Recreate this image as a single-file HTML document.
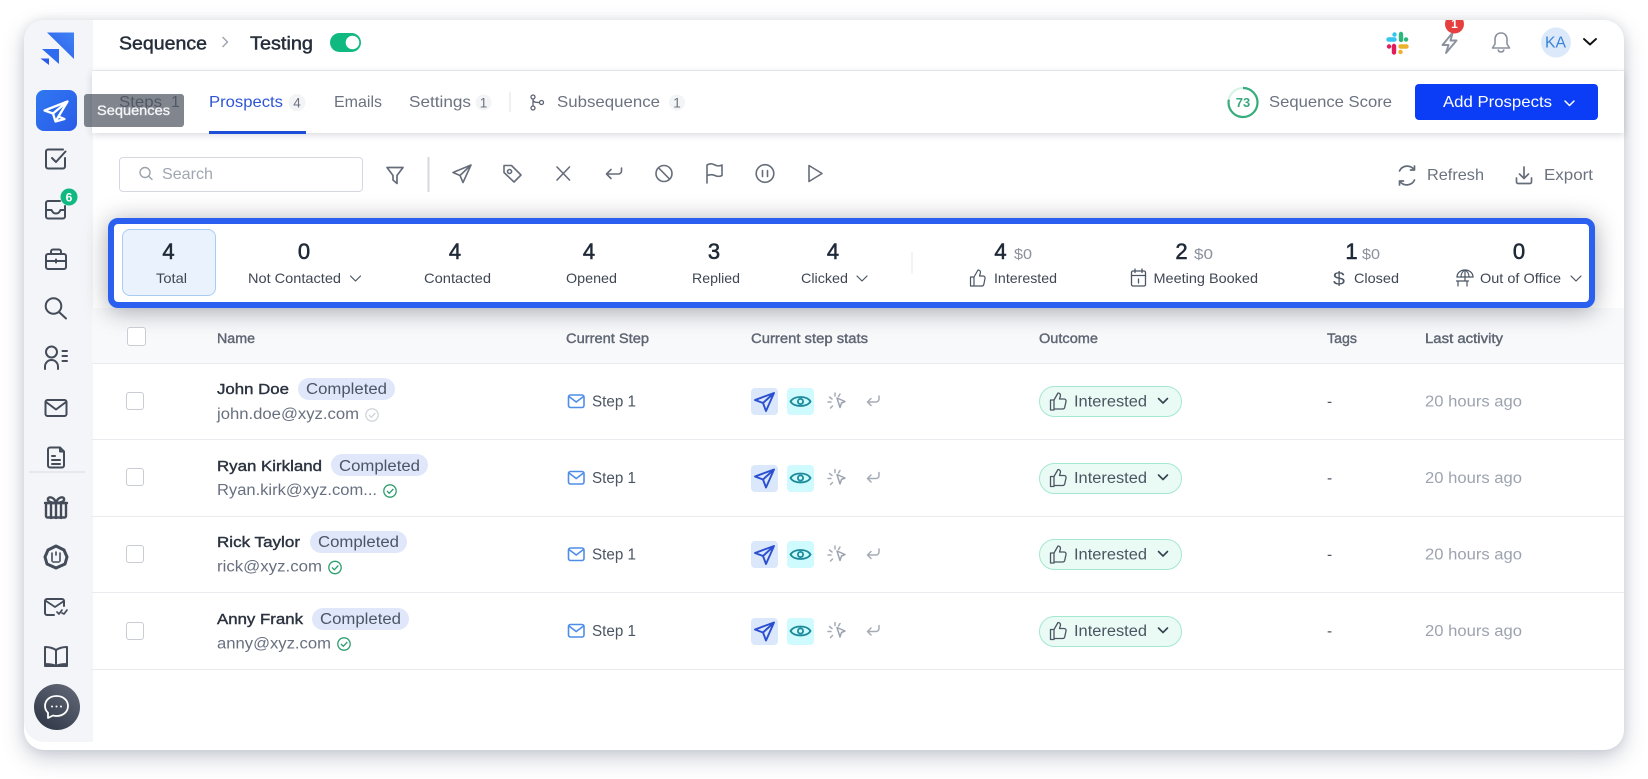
<!DOCTYPE html>
<html><head><meta charset="utf-8"><title>Sequence</title>
<style>
html,body{margin:0;padding:0;background:#fff;width:1648px;height:779px;overflow:hidden}
.a{position:absolute}
#card{left:24px;top:20px;width:1600px;height:730px;background:#fff;border-radius:20px;box-shadow:0 8px 22px rgba(70,80,110,.28),0 0 10px rgba(70,80,110,.12)}
#side{left:24px;top:20px;width:68.5px;height:722px;background:#f3f5f8;border-radius:20px 0 0 20px}
#line1{left:92px;top:70px;width:1532px;height:1px;background:#eceef1}
#tabs{left:92px;top:71px;width:1532px;height:62px;background:#fff;box-shadow:0 2px 7px rgba(40,50,70,.18)}
#thead{left:92px;top:308px;width:1532px;height:55px;background:#f8f9fb;border-bottom:1px solid #e8ebf0}
.rl{left:92px;width:1532px;height:1px;background:#e9ebef}
#panel{left:108px;top:218px;width:1487px;height:90px;box-sizing:border-box;background:#fff;border:6px solid #2b5ff0;border-radius:10px;box-shadow:0 3px 24px rgba(20,25,40,.38)}
#total{left:122px;top:229px;width:94px;height:67px;box-sizing:border-box;background:#eaf3fd;border:1.5px solid #a9cdf2;border-radius:8px}
#search{left:119px;top:157px;width:244px;height:35px;box-sizing:border-box;border:1px solid #d5d8e0;border-radius:4px;background:#fff}
#btn{left:1415px;top:84px;width:183px;height:36px;background:#0a3df5;border-radius:4px}
#act{left:36px;top:90px;width:41px;height:41px;border-radius:8px;background:linear-gradient(135deg,#2f78f2,#2a5be8)}
#chat{left:33.5px;top:684px;width:46px;height:46px;border-radius:50%;background:linear-gradient(215deg,#666b79,#2b3444)}
.cb{left:126px;width:18px;height:18px;box-sizing:border-box;border:1px solid #c9ccd3;border-radius:3px;background:#fff}
.pill{left:1039px;width:143px;height:31px;box-sizing:border-box;background:#e9fbf4;border:1px solid #a4e8cf;border-radius:16px}
.bdg{height:22px;width:97px;border-radius:11px;background:#e0e7fb}
.tl{width:27px;height:27px;border-radius:4px}
#over{left:0;top:0}
#tip{left:84px;top:94px;width:100px;height:33px;border-radius:3px;background:rgba(70,76,88,.68)}
text{font-family:"Liberation Sans",sans-serif}
.i{fill:none;stroke:#666d7a;stroke-width:1.6;stroke-linecap:round;stroke-linejoin:round}
.s{fill:none;stroke:#444c5a;stroke-width:2;stroke-linecap:round;stroke-linejoin:round}
.n{font-size:22px;fill:#1f2937;stroke:#1f2937;stroke-width:.55;text-anchor:middle}
.l{font-size:14px;fill:#3f4754}
.d{font-size:15px;fill:#8a909c}
.h{font-size:13.5px;fill:#5f6673;stroke:#5f6673;stroke-width:.4}
.nm{font-size:15px;fill:#2b3340;stroke:#2b3340;stroke-width:.4}
.bt{font-size:15.5px;fill:#4b5563}
.em{font-size:15.5px;fill:#687080}
.st{font-size:15.5px;fill:#4b5563}
.la{font-size:15.5px;fill:#9ca3af}
.tab{font-size:16px;fill:#6b7280}
.ti{font-size:18px;fill:#262e3b;stroke:#262e3b;stroke-width:.45}
</style></head><body>
<div class="a" id="card"></div>
<div class="a" id="side"></div>
<div class="a" id="line1"></div>
<div class="a" id="tabs"></div>
<div class="a" style="left:209px;top:131px;width:97px;height:2.5px;background:#1d4ed8"></div>
<div class="a" id="btn"></div>
<div class="a" id="search"></div>
<div class="a" id="thead"></div>
<div class="a rl" style="top:439px"></div>
<div class="a rl" style="top:516px"></div>
<div class="a rl" style="top:592px"></div>
<div class="a rl" style="top:669px"></div>
<div class="a" id="panel"></div>
<div class="a" id="total"></div>
<div class="a cb" style="left:127px;top:327px;width:19px;height:19px"></div>
<div class="a cb" style="top:392px"></div>
<div class="a cb" style="top:468px"></div>
<div class="a cb" style="top:545px"></div>
<div class="a cb" style="top:622px"></div>
<div class="a bdg" style="left:298px;top:378px"></div>
<div class="a bdg" style="left:331px;top:454px"></div>
<div class="a bdg" style="left:310px;top:531px"></div>
<div class="a bdg" style="left:312px;top:608px"></div>
<div class="a pill" style="top:386px"></div>
<div class="a pill" style="top:463px"></div>
<div class="a pill" style="top:539px"></div>
<div class="a pill" style="top:616px"></div>
<div class="a tl" style="left:751px;top:388px;background:#dbe8fb"></div><div class="a tl" style="left:787px;top:388px;background:#cffafe"></div>
<div class="a tl" style="left:751px;top:465px;background:#dbe8fb"></div><div class="a tl" style="left:787px;top:465px;background:#cffafe"></div>
<div class="a tl" style="left:751px;top:541px;background:#dbe8fb"></div><div class="a tl" style="left:787px;top:541px;background:#cffafe"></div>
<div class="a tl" style="left:751px;top:618px;background:#dbe8fb"></div><div class="a tl" style="left:787px;top:618px;background:#cffafe"></div>
<div class="a" id="act"></div>
<div class="a" id="chat"></div>

<svg class="a" id="over" width="1648" height="779" viewBox="0 0 1648 779" xmlns="http://www.w3.org/2000/svg">
<defs>
<linearGradient id="lg" x1="0" y1="1" x2="1" y2="0"><stop offset="0" stop-color="#2a5be8"/><stop offset="1" stop-color="#3f83f5"/></linearGradient>
<clipPath id="cardclip"><rect x="24" y="20" width="1600" height="730"/></clipPath>
<g id="rowicons">
<rect x="568.5" y="-6" width="15.5" height="12.5" rx="2" fill="none" stroke="#4f8ee8" stroke-width="1.6"/>
<path d="M569 -4.5l7.2 5.5 7.3-5.5" fill="none" stroke="#4f8ee8" stroke-width="1.6"/>
<path d="M774 -8 755 -1l8 3 3 8zM774 -8 763 2" fill="none" stroke="#2b4fd0" stroke-width="1.9" stroke-linejoin="round" stroke-linecap="round"/>
<path d="M790.500 0.500C794 -5.500 807 -5.500 810.500 0.500C807 6.500 794 6.500 790.500 0.500Z" fill="none" stroke="#1b8a9a" stroke-width="1.8"/>
<circle cx="800.500" cy="0.500" r="2.600" fill="none" stroke="#1b8a9a" stroke-width="1.800"/>
<path d="M837 -3 845 0.500 841.500 2 840 6.500Z" fill="none" stroke="#9ca3af" stroke-width="1.500" stroke-linejoin="round"/>
<path d="M835 -8v3M829.500 -4l2.500 2M828 1h3M830.500 7l2-2M840 -7l-1.500 2.500" fill="none" stroke="#a5abb5" stroke-width="1.500" stroke-linecap="round"/>
<path d="M879 -5v3a3 3 0 0 1-3 3h-8.500M871 -2.500 867.500 1l3.500 3.500" fill="none" stroke="#a5abb5" stroke-width="1.500" stroke-linecap="round" stroke-linejoin="round"/>
<path d="M1050.500 -1h3.500v10h-3.500zM1054 -1l4-7c2 0 2.800 1.500 2.300 3.300l-.8 2.700h4.500c1.500 0 2.300 1.200 2 2.500l-1.300 6c-.3 1-1 1.500-2 1.500H1054" fill="none" stroke="#4b5563" stroke-width="1.300" stroke-linejoin="round"/>
<path d="M1158.500 -2.500l4.500 4.500 4.500-4.500" fill="none" stroke="#374151" stroke-width="1.600" stroke-linecap="round" stroke-linejoin="round"/>
</g>
</defs>

<!-- logo -->
<path d="M47 32.500 74 32.500 74 59 Z" fill="url(#lg)"/>
<path d="M42 49h17v15z" fill="#2f6bee"/>
<path d="M40.500 58.500h8.500v6.500z" fill="#2a5be8"/>

<!-- sidebar icons -->
<path d="M67.500 101.500 44.500 110.500l8.500 3 2.500 8zM67.500 101.500 53 113.500M55.500 121.500l3-5 6 2.500z" fill="none" stroke="#fff" stroke-width="2.300" stroke-linejoin="round" stroke-linecap="round"/>
<g class="s">
<path d="M65 158v8.500a2 2 0 0 1-2 2H48a2 2 0 0 1-2-2v-15a2 2 0 0 1 2-2h15"/><path d="M52 158l4 4 9.500-10.500"/>
<path d="M60 201h-12a2 2 0 0 0-2 2v13.500a2 2 0 0 0 2 2h15a2 2 0 0 0 2-2V206"/><path d="M46 210h5.500c1 2.500 2.500 3.500 4.500 3.500s3.500-1 4.500-3.500H65"/>
<rect x="46" y="254" width="20" height="15" rx="2"/><path d="M51 254v-2.500a2 2 0 0 1 2-2h6a2 2 0 0 1 2 2v2.500M46 261h20M56 259.500v3"/>
<circle cx="53.500" cy="306" r="7.800"/><path d="M59 312l7 6.500"/>
<circle cx="51.500" cy="352" r="5.500"/><path d="M45 369v-2.500a6.500 6.500 0 0 1 13 0V369M62.500 351h4.500M62.500 356h4.500M62.500 361h4.500"/>
<rect x="45.500" y="400" width="21" height="16" rx="2"/><path d="M46 402l10 7.500 10-7.500"/>
<path d="M60 447.500h-10a2 2 0 0 0-2 2v16a2 2 0 0 0 2 2h12a2 2 0 0 0 2-2v-14zM60 447.500v4h4M52 456h3M52 460h8M52 464h8"/>
<g stroke-width="2.400"><rect x="46" y="503" width="20" height="14.500" rx="1.500"/><path d="M45 503h22M51 503v15M56 503v15M61 503v15M56 503c-2-7-9-7-8-3 .5 2 5 3 8 3 3 0 7.500-1 8-3 1-4-6-4-8 3"/></g>
<path d="M56 546l8 4 3 7-2 7-9 4-9-4-2-7 3-7z" stroke-width="3"/><path d="M52 553v8M60 553v8M53 562h6M56 552v3" stroke-width="1.600"/>
<path d="M64 606v-5a2 2 0 0 0-2-2H47a2 2 0 0 0-2 2v12a2 2 0 0 0 2 2h7"/><path d="M46 601l9 6 9-6M57 612l2 2 3-4M62 613l2 1 3-4" stroke-width="1.700"/>
<path d="M56 650c-3-2-6-3-11-3v17c5 0 8 .5 11 2 3-1.500 6-2 11-2v-17c-5 0-8 1-11 3zM56 650v16M45 664v2h22v-2"/>
</g>
<circle cx="69" cy="197" r="8.500" fill="#10b981"/><text x="69" y="201.500" font-size="12" font-weight="700" fill="#fff" text-anchor="middle">6</text>
<line x1="29" y1="472" x2="85" y2="472" stroke="#d9dce2" stroke-width="1"/>
<path d="M56.500 696c-7 0-11.500 4.500-11.500 10 0 2.800 1.200 5 3 6.800V718l5-2.500c1 .3 2.300.5 3.500.5 7 0 11.500-4.500 11.500-10s-4.500-10-11.500-10z" fill="none" stroke="#fff" stroke-width="1.800" stroke-linejoin="round"/>
<circle cx="52" cy="706.500" r="1" fill="#fff"/><circle cx="56.500" cy="706.500" r="1" fill="#fff"/><circle cx="61" cy="706.500" r="1" fill="#fff"/>

<!-- header -->
<text x="119" y="49.500" class="ti" textLength="88" lengthAdjust="spacingAndGlyphs">Sequence</text>
<path d="M222.500 37l5 5-5 5" fill="none" stroke="#9ca3af" stroke-width="1.400"/>
<text x="250" y="49.500" class="ti" textLength="63" lengthAdjust="spacingAndGlyphs">Testing</text>
<rect x="330" y="33" width="31" height="19" rx="9.500" fill="#10b97f"/><circle cx="352.500" cy="42.500" r="6.800" fill="#fff"/>

<!-- slack -->
<g fill="none" stroke-linecap="round" stroke-width="4.400">
<path d="M1388.500 39.500h6M1394.500 34.500v.1" stroke="#36c5f0"/>
<path d="M1401 34v6M1406 39.500h.1" stroke="#2eb67d"/>
<path d="M1400.500 46.500h6M1400.500 52h.1" stroke="#ecb22e"/>
<path d="M1394 46v6.500M1389 46.500h.1" stroke="#e01e5a"/>
</g>
<path d="M1452 33.500 1442.500 45h6l-2.500 8 10.500-12.500h-6l2-7z" fill="none" stroke="#8b919d" stroke-width="1.900" stroke-linejoin="round" stroke-linecap="round"/>
<g clip-path="url(#cardclip)"><circle cx="1454.500" cy="24" r="9.500" fill="#e5403f"/><text x="1454.500" y="28" font-size="12" font-weight="700" fill="#fff" text-anchor="middle">1</text></g>
<path d="M1501 33c-4 0-6 3-6 6.500v4.500l-2.500 4h17l-2.500-4v-4.500c0-3.500-2-6.500-6-6.500zM1498 49.500c.5 1.800 1.500 2.500 3 2.500s2.500-.7 3-2.500" fill="none" stroke="#8b919d" stroke-width="1.600" stroke-linejoin="round"/>
<circle cx="1556" cy="42.500" r="15" fill="#dbe9fb"/>
<text x="1545" y="47.500" font-size="15.500" fill="#3b82d6" textLength="21" lengthAdjust="spacingAndGlyphs">KA</text>
<path d="M1584 39l6 5.500 6-5.500" fill="none" stroke="#111" stroke-width="1.900" stroke-linecap="round" stroke-linejoin="round"/>

<!-- tabs -->
<text x="119" y="107" class="tab" textLength="43" lengthAdjust="spacingAndGlyphs">Steps</text><text x="171" y="107" class="tab">1</text>
<text x="209" y="107" font-size="16" fill="#2f55d4" textLength="74" lengthAdjust="spacingAndGlyphs">Prospects</text>
<circle cx="297" cy="102.500" r="8.500" fill="#f3f4f6"/><text x="297" y="107.500" font-size="13.500" fill="#6b7280" text-anchor="middle">4</text>
<text x="334" y="107" class="tab" textLength="48" lengthAdjust="spacingAndGlyphs">Emails</text>
<text x="409" y="107" class="tab" textLength="62" lengthAdjust="spacingAndGlyphs">Settings</text>
<circle cx="483.500" cy="102.500" r="8" fill="#f3f4f6"/><text x="483.500" y="107.500" font-size="13.500" fill="#6b7280" text-anchor="middle">1</text>
<line x1="510" y1="92" x2="510" y2="112" stroke="#dfe1e6" stroke-width="1"/>
<g fill="none" stroke="#5b6270" stroke-width="1.300"><circle cx="533" cy="97" r="2"/><circle cx="533" cy="108" r="2"/><circle cx="541.500" cy="102.500" r="2"/><path d="M533 99v7M533 100c0 2 2 2.500 6.500 2.500"/></g>
<text x="557" y="107" class="tab" textLength="103" lengthAdjust="spacingAndGlyphs">Subsequence</text>
<circle cx="677" cy="102.500" r="8" fill="#f3f4f6"/><text x="677" y="107.500" font-size="13.500" fill="#6b7280" text-anchor="middle">1</text>

<circle cx="1243" cy="102.500" r="14.500" fill="none" stroke="#d5f3e6" stroke-width="2"/>
<path d="M1243 88a14.500 14.500 0 1 1-14.200 11.700" fill="none" stroke="#37ad7d" stroke-width="2.200"/>
<text x="1243" y="107" font-size="13" font-weight="700" fill="#3aa87c" text-anchor="middle">73</text>
<text x="1269" y="107" class="tab" textLength="123" lengthAdjust="spacingAndGlyphs">Sequence Score</text>
<text x="1443" y="107" font-size="16" fill="#fff" textLength="109" lengthAdjust="spacingAndGlyphs">Add Prospects</text>
<path d="M1565 101l4.500 4.500 4.500-4.500" fill="none" stroke="#fff" stroke-width="1.500" stroke-linecap="round" stroke-linejoin="round"/>

<!-- toolbar -->
<circle cx="145" cy="172.500" r="5" fill="none" stroke="#9ca3af" stroke-width="1.400"/><path d="M149 176.500l3 3" stroke="#9ca3af" stroke-width="1.400" stroke-linecap="round"/>
<text x="162" y="179" font-size="16" fill="#a0a6b1" textLength="51" lengthAdjust="spacingAndGlyphs">Search</text>
<path d="M387 167.500h16l-6 8v8l-4-3.500v-4.500z" fill="none" stroke="#666d7a" stroke-width="1.700" stroke-linejoin="round"/>
<line x1="428.500" y1="157" x2="428.500" y2="192" stroke="#d5d8de" stroke-width="2"/>
<g class="i">
<path d="M471 165 453 172.500l7 3 3 7zM471 165 460 175.500"/>
<path d="M504 165.500h7.500l9.500 9.500-7 7-10-9.500zM509.500 169.500a2 2 0 1 0 .1 0"/>
<path d="M557 167l12.500 13M569.500 167 557 180"/>
<path d="M621.500 167v3a3 3 0 0 1-3 3h-11.500M611 168.500 606.500 173l4.500 4.500" transform="translate(0,1)"/>
<circle cx="664" cy="173.500" r="8"/><path d="M658.500 167.800 669.500 179"/>
<path d="M707 183v-18c4-2 6-1 8 0s4 1.500 7 0v10.500c-3 1.500-5 1-7 0s-4-1.500-8 0"/>
<circle cx="765" cy="173.500" r="8.800"/><path d="M762.500 170.500v6M767.500 170.500v6"/>
<path d="M809 165.500l13 8-13 8z"/>
</g>
<g fill="none" stroke="#666d7a" stroke-width="1.700" stroke-linecap="round" stroke-linejoin="round">
<path d="M1399.500 171a8.500 8.500 0 0 1 14.500-1.500M1414.500 180a8.500 8.500 0 0 1-14.500 1.500M1414.500 166v4h-4M1399.500 185v-4h4"/>
<path d="M1524 167v11M1519.500 174l4.500 4.500 4.500-4.500M1516.500 178v4a1.500 1.500 0 0 0 1.500 1.500h12a1.500 1.500 0 0 0 1.500-1.500v-4"/>
</g>
<text x="1427" y="180" class="tab" textLength="57" lengthAdjust="spacingAndGlyphs">Refresh</text>
<text x="1544" y="180" class="tab" textLength="49" lengthAdjust="spacingAndGlyphs">Export</text>

<!-- stats -->
<text x="168.500" y="259" class="n">4</text><text x="156" y="283" class="l" textLength="31" lengthAdjust="spacingAndGlyphs">Total</text>
<text x="304" y="259" class="n">0</text><text x="248" y="283" class="l" textLength="93" lengthAdjust="spacingAndGlyphs">Not Contacted</text>
<path d="M350.500 276l5 5 5-5" fill="none" stroke="#4b5563" stroke-width="1.200" stroke-linecap="round" stroke-linejoin="round"/>
<text x="455" y="259" class="n">4</text><text x="424" y="283" class="l" textLength="67" lengthAdjust="spacingAndGlyphs">Contacted</text>
<text x="589" y="259" class="n">4</text><text x="566" y="283" class="l" textLength="51" lengthAdjust="spacingAndGlyphs">Opened</text>
<text x="714" y="259" class="n">3</text><text x="692" y="283" class="l" textLength="48" lengthAdjust="spacingAndGlyphs">Replied</text>
<text x="833" y="259" class="n">4</text><text x="801" y="283" class="l" textLength="47" lengthAdjust="spacingAndGlyphs">Clicked</text>
<path d="M857 276l5 5 5-5" fill="none" stroke="#4b5563" stroke-width="1.200" stroke-linecap="round" stroke-linejoin="round"/>
<line x1="912" y1="252" x2="912" y2="274" stroke="#e5e7eb"/>
<text x="1000.500" y="259" class="n">4</text><text x="1014" y="259" class="d" textLength="18" lengthAdjust="spacingAndGlyphs">$0</text>
<text x="1181.500" y="259" class="n">2</text><text x="1194" y="259" class="d" textLength="19" lengthAdjust="spacingAndGlyphs">$0</text>
<text x="1351.500" y="259" class="n">1</text><text x="1362" y="259" class="d" textLength="18" lengthAdjust="spacingAndGlyphs">$0</text>
<text x="1519" y="259" class="n">0</text>
<path d="M970.500 277h3.500v9h-3.500zM974 277l4-7c2 0 2.800 1.500 2.300 3.300l-.8 2.700h3.500c1.500 0 2.300 1.200 2 2.500l-1.200 6c-.2 1-1 1.500-2 1.500H974" fill="none" stroke="#4b5563" stroke-width="1.200" stroke-linejoin="round"/>
<text x="994" y="283" class="l" textLength="63" lengthAdjust="spacingAndGlyphs">Interested</text>
<g fill="none" stroke="#4b5563" stroke-width="1.300" stroke-linecap="round"><rect x="1131.500" y="271" width="14" height="15" rx="1.500"/><path d="M1131.500 275.500h14M1135 269v3.500M1142 269v3.500M1138.500 279v4"/></g>
<text x="1153.500" y="283" class="l" textLength="104.500" lengthAdjust="spacingAndGlyphs">Meeting Booked</text>
<text x="1333" y="285" font-size="18" fill="#4b5563" textLength="12" lengthAdjust="spacingAndGlyphs">$</text>
<text x="1354" y="283" class="l" textLength="45" lengthAdjust="spacingAndGlyphs">Closed</text>
<g fill="none" stroke="#4b5563" stroke-width="1.200" stroke-linecap="round"><path d="M1457 277c0-4 3.500-7 8-7s8 3 8 7zM1465 270v11M1461 277c0-3.500 2-6 4-7 2 1 4 3.500 4 7M1456.500 281h12M1458 281v5M1467 281v5"/></g>
<text x="1480" y="283" class="l" textLength="81" lengthAdjust="spacingAndGlyphs">Out of Office</text>
<path d="M1571 276l5 5 5-5" fill="none" stroke="#4b5563" stroke-width="1.200" stroke-linecap="round" stroke-linejoin="round"/>

<!-- table header -->
<text x="217" y="343" class="h" textLength="38" lengthAdjust="spacingAndGlyphs">Name</text>
<text x="566" y="343" class="h" textLength="83" lengthAdjust="spacingAndGlyphs">Current Step</text>
<text x="751" y="343" class="h" textLength="117" lengthAdjust="spacingAndGlyphs">Current step stats</text>
<text x="1039" y="343" class="h" textLength="59" lengthAdjust="spacingAndGlyphs">Outcome</text>
<text x="1327" y="343" class="h" textLength="30" lengthAdjust="spacingAndGlyphs">Tags</text>
<text x="1425" y="343" class="h" textLength="78" lengthAdjust="spacingAndGlyphs">Last activity</text>

<!-- row 1 -->
<text x="217" y="394" class="nm" textLength="72" lengthAdjust="spacingAndGlyphs">John Doe</text>
<text x="306" y="394" class="bt" textLength="81" lengthAdjust="spacingAndGlyphs">Completed</text>
<text x="217" y="419" class="em" textLength="142" lengthAdjust="spacingAndGlyphs">john.doe@xyz.com</text>
<g fill="none" stroke="#d1d5db" stroke-width="1.300"><circle cx="372" cy="415" r="6.200"/><path d="M369 415l2.300 2.300 4-4.300"/></g>
<use href="#rowicons" transform="translate(0,401)"/>
<text x="592" y="406.300" class="st" textLength="44" lengthAdjust="spacingAndGlyphs">Step 1</text>
<text x="1074" y="406.300" class="st" textLength="73" lengthAdjust="spacingAndGlyphs">Interested</text>
<text x="1327" y="406.300" class="st">-</text>
<text x="1425" y="406.300" class="la" textLength="97" lengthAdjust="spacingAndGlyphs">20 hours ago</text>

<!-- row 2 -->
<text x="217" y="471" class="nm" textLength="105" lengthAdjust="spacingAndGlyphs">Ryan Kirkland</text>
<text x="339" y="471" class="bt" textLength="81" lengthAdjust="spacingAndGlyphs">Completed</text>
<text x="217" y="495" class="em" textLength="160" lengthAdjust="spacingAndGlyphs">Ryan.kirk@xyz.com...</text>
<g fill="none" stroke="#2f9e6e" stroke-width="1.300"><circle cx="390" cy="491" r="6.200"/><path d="M387 491l2.300 2.300 4-4.300"/></g>
<use href="#rowicons" transform="translate(0,477.500)"/>
<text x="592" y="483" class="st" textLength="44" lengthAdjust="spacingAndGlyphs">Step 1</text>
<text x="1074" y="483" class="st" textLength="73" lengthAdjust="spacingAndGlyphs">Interested</text>
<text x="1327" y="483" class="st">-</text>
<text x="1425" y="483" class="la" textLength="97" lengthAdjust="spacingAndGlyphs">20 hours ago</text>

<!-- row 3 -->
<text x="217" y="547" class="nm" textLength="83" lengthAdjust="spacingAndGlyphs">Rick Taylor</text>
<text x="318" y="547" class="bt" textLength="81" lengthAdjust="spacingAndGlyphs">Completed</text>
<text x="217" y="571.500" class="em" textLength="105" lengthAdjust="spacingAndGlyphs">rick@xyz.com</text>
<g fill="none" stroke="#2f9e6e" stroke-width="1.300"><circle cx="335" cy="567.500" r="6.200"/><path d="M332 567.500l2.300 2.300 4-4.300"/></g>
<use href="#rowicons" transform="translate(0,554)"/>
<text x="592" y="559.500" class="st" textLength="44" lengthAdjust="spacingAndGlyphs">Step 1</text>
<text x="1074" y="559.500" class="st" textLength="73" lengthAdjust="spacingAndGlyphs">Interested</text>
<text x="1327" y="559.500" class="st">-</text>
<text x="1425" y="559.500" class="la" textLength="97" lengthAdjust="spacingAndGlyphs">20 hours ago</text>

<!-- row 4 -->
<text x="217" y="624" class="nm" textLength="86" lengthAdjust="spacingAndGlyphs">Anny Frank</text>
<text x="320" y="624" class="bt" textLength="81" lengthAdjust="spacingAndGlyphs">Completed</text>
<text x="217" y="648.500" class="em" textLength="114" lengthAdjust="spacingAndGlyphs">anny@xyz.com</text>
<g fill="none" stroke="#2f9e6e" stroke-width="1.300"><circle cx="344" cy="644" r="6.200"/><path d="M341 644l2.300 2.300 4-4.300"/></g>
<use href="#rowicons" transform="translate(0,630.500)"/>
<text x="592" y="636" class="st" textLength="44" lengthAdjust="spacingAndGlyphs">Step 1</text>
<text x="1074" y="636" class="st" textLength="73" lengthAdjust="spacingAndGlyphs">Interested</text>
<text x="1327" y="636" class="st">-</text>
<text x="1425" y="636" class="la" textLength="97" lengthAdjust="spacingAndGlyphs">20 hours ago</text>
</svg>

<div class="a" id="tip"></div>
<svg class="a" style="left:0;top:0" width="300" height="140" viewBox="0 0 300 140"><text x="97" y="115" font-size="13.500" fill="#f4f5f7" stroke="#f4f5f7" stroke-width=".35" textLength="73" lengthAdjust="spacingAndGlyphs">Sequences</text></svg>
</body></html>
